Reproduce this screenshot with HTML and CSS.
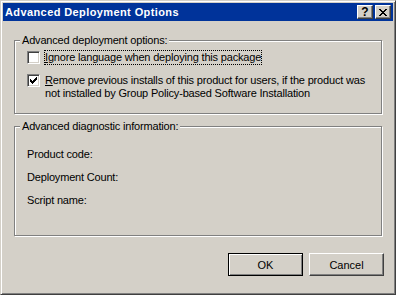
FILE: index.html
```html
<!DOCTYPE html>
<html lang="en">
<head>
  <meta charset="UTF-8" />
  <title>Advanced Deployment Options</title>
  <link rel="stylesheet" href="styles.css">
</head>
<body>

<div class="window">
  <div class="titlebar">
    <span class="title">Advanced Deployment Options</span>
    <div class="caption-btn help">?</div>
    <div class="caption-btn close">
      <svg width="8" height="7" viewBox="0 0 8 7" shape-rendering="crispEdges">
        <path fill="#000" d="M0 0h2v1h-2zM6 0h2v1h-2zM1 1h2v1h-2zM5 1h2v1h-2zM2 2h4v1h-4zM3 3h2v1h-2zM2 4h4v1h-4zM1 5h2v1h-2zM5 5h2v1h-2zM0 6h2v1h-2zM6 6h2v1h-2z"/>
      </svg>
    </div>
  </div>

  <div class="content">
    <!-- deployment options -->
    <div class="groupbox group-options">
      <span class="group-caption">Advanced deployment options:</span>
      <div class="check-row">
        <span class="checkbox"></span>
        <span class="check-label focused"><u>I</u>gnore language when deploying this package</span>
      </div>
      <div class="check-row">
        <span class="checkbox">
          <svg width="7" height="7" viewBox="0 0 7 7" shape-rendering="crispEdges">
            <path fill="#000" d="M6 0h1v1h-1zM5 1h2v1h-2zM0 2h1v1h-1zM4 2h3v1h-3zM0 3h2v1h-2zM3 3h3v1h-3zM0 4h5v1h-5zM1 5h3v1h-3zM2 6h1v1h-1z"/>
          </svg>
        </span>
        <span class="check-label"><u>R</u>emove previous installs of this product for users, if the product was<br/>not installed by Group Policy-based Software Installation</span>
      </div>
    </div>

    <!-- diagnostic info -->
    <div class="groupbox group-info">
      <span class="group-caption">Advanced diagnostic information:</span>
      <div class="info-row">Product code:</div>
      <div class="info-row">Deployment Count:</div>
      <div class="info-row">Script name:</div>
    </div>

    <div class="buttons">
      <button class="btn default">OK</button>
      <button class="btn">Cancel</button>
    </div>
  </div>
</div>

</body>
</html>
```

FILE: styles.css
```css
body {
  margin: 0;
  padding: 0;
  font-family: 'Liberation Sans', Arial, sans-serif;
  font-size: 11px;
  color: #000;
  background-color: #d4d0c8;
  overflow: hidden;
}

.window {
  box-sizing: border-box;
  width: 396px;
  height: 295px;
  padding: 2px;
  background-color: #d4d0c8;
  border: 1px solid;
  border-color: #d4d0c8 #404040 #404040 #d4d0c8;
  box-shadow: inset 1px 1px 0 #fff, inset -1px -1px 0 #808080;
}

.titlebar {
  height: 18px;
  background-color: #00339a;
  display: flex;
  align-items: center;
  padding: 0 2px;
  gap: 2px;
}

.title {
  flex: 1;
  color: #fff;
  font-weight: bold;
  letter-spacing: 0.4px;
  line-height: 18px;
}

.caption-btn {
  box-sizing: border-box;
  width: 16px;
  height: 14px;
  background-color: #d4d0c8;
  border: 1px solid;
  border-color: #fff #404040 #404040 #fff;
  box-shadow: inset -1px -1px 0 #808080;
  display: flex;
  align-items: center;
  justify-content: center;
}

.caption-btn.help {
  font-weight: bold;
  font-size: 12px;
  line-height: 12px;
}

.caption-btn.close svg {
  margin-top: 1px;
}

.content {
  padding: 19px 11px 0 11px;
  letter-spacing: -0.18px;
}

/* etched group boxes */
.groupbox {
  position: relative;
  box-sizing: border-box;
  border: 1px solid #808080;
  box-shadow: 1px 1px 0 #fff, inset 1px 1px 0 #fff;
}

.group-caption {
  position: absolute;
  left: 5px;
  top: -7px;
  padding: 0 2px;
  line-height: 13px;
  background-color: #d4d0c8;
}

.group-options {
  height: 74px;
  padding: 10px 0 0 12px;
}

.group-info {
  margin-top: 12px;
  height: 110px;
  padding: 21px 0 0 12px;
}

.check-row {
  display: flex;
  align-items: flex-start;
  margin-bottom: 10px;
}

.checkbox {
  box-sizing: border-box;
  flex: none;
  width: 13px;
  height: 13px;
  background-color: #fff;
  border: 1px solid;
  border-color: #808080 #fff #fff #808080;
  box-shadow: inset 1px 1px 0 #404040, inset -1px -1px 0 #d4d0c8;
  display: flex;
  align-items: center;
  justify-content: center;
}

.check-label {
  margin-left: 5px;
  line-height: 13px;
}

.check-label.focused {
  outline: 1px dotted #000;
}

.info-row {
  line-height: 13px;
  margin-bottom: 10px;
}

.buttons {
  display: flex;
  justify-content: flex-end;
  gap: 6px;
  margin-top: 17px;
  margin-right: -2px;
}

.btn {
  box-sizing: border-box;
  width: 75px;
  height: 23px;
  padding: 0;
  font-family: inherit;
  font-size: 11px;
  color: #000;
  background-color: #d4d0c8;
  border: 1px solid;
  border-color: #fff #404040 #404040 #fff;
  box-shadow: inset -1px -1px 0 #808080;
}

.btn.default {
  border-color: #000;
  box-shadow: inset 1px 1px 0 #fff, inset -1px -1px 0 #808080;
}
```
